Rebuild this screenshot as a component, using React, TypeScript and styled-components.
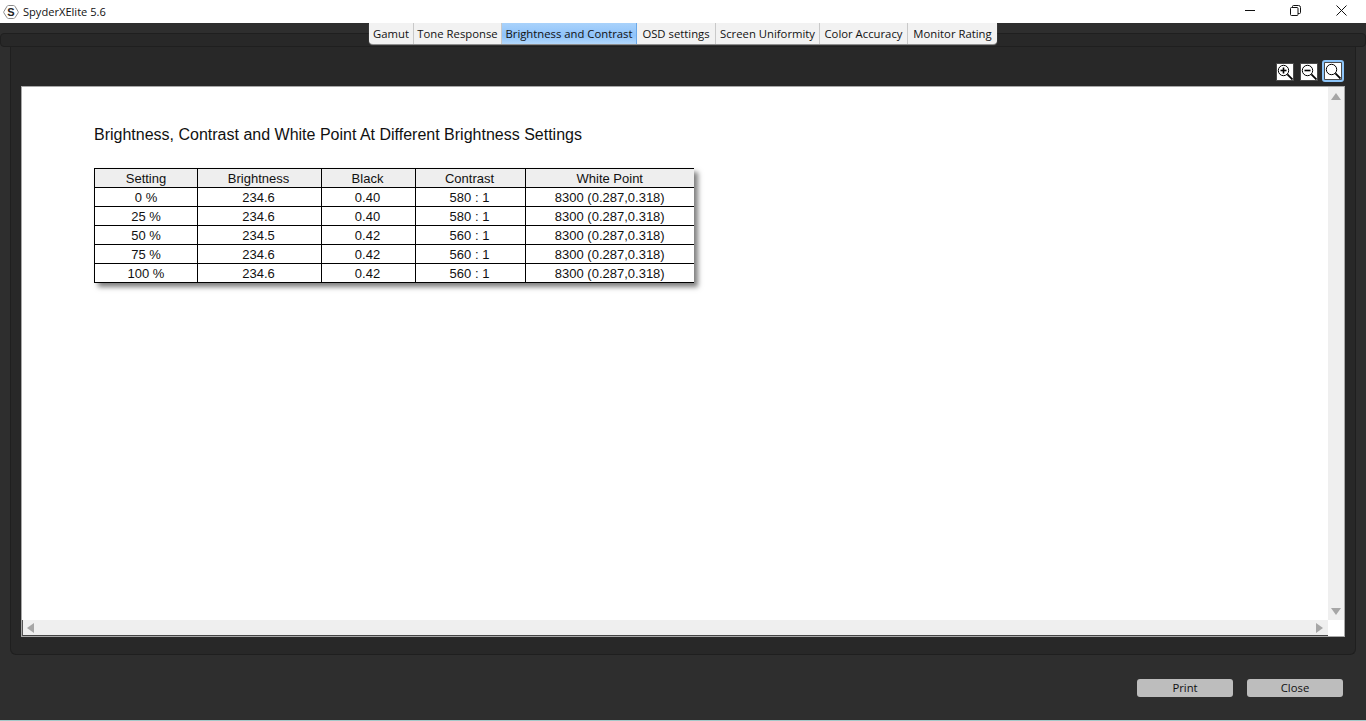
import React, { ReactElement } from 'react';
import styled, { createGlobalStyle } from 'styled-components';

const GlobalStyle = createGlobalStyle`
  html, body { margin: 0; padding: 0; height: 100%; overflow: hidden; }
  body { font-family: "Open Sans", "Noto Sans", sans-serif; background: #2e2e2e; }
`;

const Page = styled.div`
  width: 1366px;
  height: 721px;
  display: flex;
  flex-direction: column;
  background: #2e2e2e;
  border-bottom: 1px solid #a4c8c8;
  box-sizing: border-box;
`;

const TitleBar = styled.div`
  height: 23px;
  flex: none;
  display: flex;
  align-items: center;
  background: #fff;
  padding-left: 3px;
`;

const AppName = styled.span`
  font-size: 11.1px;
  color: #111;
  margin-left: 4px;
  flex: 1;
  padding-bottom: 1px;
`;

const WindowButton = styled.div`
  width: 45.5px;
  height: 20px;
  margin-bottom: 3px;
  display: flex;
  align-items: center;
  justify-content: center;
`;

const WindowButtons = styled.div`
  display: flex;
  margin-right: 2px;
`;

const TabBand = styled.div`
  height: 24px;
  flex: none;
  position: relative;
  padding-top: 10px;
  box-sizing: border-box;
`;

const TabStrip = styled.div`
  height: 14px;
  box-sizing: border-box;
  background: #282828;
  border: 1px solid #1f1f1f;
  border-radius: 4px;
`;

const Tabs = styled.div`
  position: absolute;
  top: 0;
  left: 369px;
  width: 628px;
  height: 21px;
  display: flex;
  background: #f2f2f2;
  border-radius: 0 0 4px 4px;
  box-shadow: 0 1px 1px #9a9a9a;
`;

const Tab = styled.div<{ $active?: boolean; $w: number }>`
  width: ${(p) => p.$w}px;
  box-sizing: border-box;
  text-align: center;
  font-size: 11.3px;
  line-height: 21px;
  white-space: nowrap;
  color: #111;
  background: ${(p) => (p.$active ? 'linear-gradient(#a9d2fb, #8fc3fa 60%, #b4d8fc)' : 'transparent')};
  border-right: 1px solid ${(p) => (p.$active ? '#6aa9ea' : '#c9c9c9')};
  &:last-child { border-right: none; }
`;

const Panel = styled.div`
  margin: 0 10px;
  width: 1346px;
  height: 608px;
  flex: none;
  box-sizing: border-box;
  background: #282828;
  border: 1px solid #1f1f1f;
  border-top: none;
  border-radius: 0 0 6px 6px;
  padding: 13px 10px 0 10px;
  display: flex;
  flex-direction: column;
`;

const ZoomBar = styled.div`
  height: 26px;
  flex: none;
  display: flex;
  justify-content: flex-end;
  align-items: flex-start;
  padding-right: 3px;
`;

const ZoomButton = styled.div<{ $selected?: boolean }>`
  width: 18px;
  height: 18px;
  margin: ${(p) => (p.$selected ? '2px 0 0 6px' : '3px 0 0 6px')};
  box-sizing: border-box;
  background: #fff;
  border: 1px solid #4a4a4a;
  outline: ${(p) => (p.$selected ? '2px solid #8cc4f8' : 'none')};
  outline-offset: 0;
  border-radius: ${(p) => (p.$selected ? '1px' : '0')};
  display: flex;
  align-items: center;
  justify-content: center;
  &:first-child { margin-left: 0; }
`;

const Viewer = styled.div`
  width: 1324px;
  height: 551px;
  flex: none;
  box-sizing: border-box;
  background: #fff;
  border: 1px solid #a8a8a8;
  display: grid;
  grid-template-columns: 1fr 16px;
  grid-template-rows: 1fr 16px;
`;

const Document = styled.div`
  padding: 39px 0 0 72px;
  font-family: "Liberation Sans", Arial, sans-serif;
  color: #111;
`;

const Heading = styled.h1`
  margin: 0 0 24px;
  font-size: 16px;
  font-weight: 400;
  line-height: 18px;
`;

const ReportTable = styled.table`
  border-collapse: collapse;
  table-layout: fixed;
  width: 599px;
  font-size: 13px;
  box-shadow: 4px 4px 5px rgba(0, 0, 0, 0.5);
  background: #fff;
`;

const HeadCell = styled.th<{ $w: number }>`
  width: ${(p) => p.$w}px;
  height: 19px;
  box-sizing: border-box;
  padding: 1px 0 0;
  font-weight: 400;
  background: #eee;
  border: 1px solid #000;
  &:not(:first-child) { padding-right: 2px; }
  &:last-child { border-right: none; padding-right: 0; }
`;

const Cell = styled.td`
  height: 19px;
  box-sizing: border-box;
  padding: 1px 0 0;
  text-align: center;
  border: 1px solid #000;
  &:not(:first-child) { padding-right: 2px; }
  &:last-child { border-right: none; padding-right: 0; }
`;

const VTrack = styled.div`
  background: #efefef;
  display: flex;
  flex-direction: column;
  justify-content: space-between;
  align-items: center;
  padding: 6px 0 5px;
`;

const HTrack = styled.div`
  background: #efefef;
  border-left: 1px solid #555;
  border-bottom: 1px solid #444;
  display: flex;
  justify-content: space-between;
  align-items: center;
  padding: 0 5px 0 4px;
`;

const Corner = styled.div`
  background: #fff;
`;

const Arrow = styled.div<{ $dir: 'up' | 'down' | 'left' | 'right' }>`
  width: 0;
  height: 0;
  border-style: solid;
  border-color: transparent;
  ${(p) => (p.$dir === 'up' ? 'border-width: 0 5px 7px; border-bottom-color: #a6a6a6;' : '')}
  ${(p) => (p.$dir === 'down' ? 'border-width: 7px 5px 0; border-top-color: #a6a6a6;' : '')}
  ${(p) => (p.$dir === 'left' ? 'border-width: 5px 7px 5px 0; border-right-color: #a6a6a6;' : '')}
  ${(p) => (p.$dir === 'right' ? 'border-width: 5px 0 5px 7px; border-left-color: #a6a6a6;' : '')}
`;

const Footer = styled.div`
  flex: 1;
  display: flex;
  justify-content: flex-end;
  gap: 14px;
  padding: 24px 23px 0 0;
`;

const FooterButton = styled.div`
  width: 96px;
  height: 18px;
  background: #bdbdbd;
  border-radius: 3px;
  font-size: 11.3px;
  line-height: 18px;
  text-align: center;
  color: #111;
`;

const tabs = [
  { label: 'Gamut', w: 45 },
  { label: 'Tone Response', w: 88 },
  { label: 'Brightness and Contrast', w: 135, active: true },
  { label: 'OSD settings', w: 79 },
  { label: 'Screen Uniformity', w: 104 },
  { label: 'Color Accuracy', w: 88 },
  { label: 'Monitor Rating', w: 89 },
];

const columns = [
  { label: 'Setting', w: 103 },
  { label: 'Brightness', w: 124 },
  { label: 'Black', w: 94 },
  { label: 'Contrast', w: 110 },
  { label: 'White Point', w: 168 },
];

const rows = [
  ['0 %', '234.6', '0.40', '580 : 1', '8300 (0.287,0.318)'],
  ['25 %', '234.6', '0.40', '580 : 1', '8300 (0.287,0.318)'],
  ['50 %', '234.5', '0.42', '560 : 1', '8300 (0.287,0.318)'],
  ['75 %', '234.6', '0.42', '560 : 1', '8300 (0.287,0.318)'],
  ['100 %', '234.6', '0.42', '560 : 1', '8300 (0.287,0.318)'],
];

const Logo = () => (
  <svg width="16" height="16" viewBox="0 0 16 16">
    <path d="M5.500 1.500h5q1 0 1.600 1l3 5q.4.7 0 1.400l-3 4.600q-.6 1-1.600 1h-5q-1 0-1.600-1l-3-4.600q-.4-.7 0-1.400l3-5q.6-1 1.600-1z" fill="#fff" stroke="#8a8a8a" strokeWidth="1" />
    <text x="8" y="12" textAnchor="middle" fontSize="11" fontWeight="700" fontFamily="Liberation Sans" fill="#222">S</text>
  </svg>
);

const Magnifier = ({ mark }: { mark?: 'plus' | 'minus' }) => (
  <svg width="16" height="16" viewBox="0 0 16 16" fill="none" stroke="#000">
    <circle cx="6.500" cy="6.500" r="5.200" strokeWidth="1" />
    <path d="M10.400 10.400 15.500 15.500" strokeWidth="1.800" />
    {mark && <path d="M3.500 6.500h6" strokeWidth="1.600" />}
    {mark === 'plus' && <path d="M6.500 3.500v6" strokeWidth="1.600" />}
  </svg>
);

const App = (): ReactElement => (
  <Page>
    <GlobalStyle />
    <TitleBar>
      <Logo />
      <AppName>SpyderXElite 5.6</AppName>
      <WindowButtons>
        <WindowButton>
          <svg width="11" height="11" viewBox="0 0 11 11"><path d="M0 5.500h10" stroke="#111" /></svg>
        </WindowButton>
        <WindowButton>
          <svg width="11" height="11" viewBox="0 0 11 11" fill="none" stroke="#111">
            <rect x="0.500" y="2.500" width="7.500" height="8" rx="1" />
            <path d="M2.500 2.500V1.500a1 1 0 0 1 1-1h5a2 2 0 0 1 2 2v5a1 1 0 0 1-1 1H8" />
          </svg>
        </WindowButton>
        <WindowButton>
          <svg width="11" height="11" viewBox="0 0 11 11"><path d="M0.500 0.500l10 10M10.500 0.500l-10 10" stroke="#111" /></svg>
        </WindowButton>
      </WindowButtons>
    </TitleBar>
    <TabBand>
      <TabStrip />
      <Tabs>
        {tabs.map((t) => (
          <Tab key={t.label} $w={t.w} $active={t.active}>{t.label}</Tab>
        ))}
      </Tabs>
    </TabBand>
    <Panel>
      <ZoomBar>
        <ZoomButton><Magnifier mark="plus" /></ZoomButton>
        <ZoomButton><Magnifier mark="minus" /></ZoomButton>
        <ZoomButton $selected><Magnifier /></ZoomButton>
      </ZoomBar>
      <Viewer>
        <Document>
          <Heading>Brightness, Contrast and White Point At Different Brightness Settings</Heading>
          <ReportTable>
            <thead>
              <tr>
                {columns.map((c) => (
                  <HeadCell key={c.label} $w={c.w}>{c.label}</HeadCell>
                ))}
              </tr>
            </thead>
            <tbody>
              {rows.map((r) => (
                <tr key={r[0]}>
                  {r.map((v, i) => (
                    <Cell key={i}>{v}</Cell>
                  ))}
                </tr>
              ))}
            </tbody>
          </ReportTable>
        </Document>
        <VTrack>
          <Arrow $dir="up" />
          <Arrow $dir="down" />
        </VTrack>
        <HTrack>
          <Arrow $dir="left" />
          <Arrow $dir="right" />
        </HTrack>
        <Corner />
      </Viewer>
    </Panel>
    <Footer>
      <FooterButton>Print</FooterButton>
      <FooterButton>Close</FooterButton>
    </Footer>
  </Page>
);

export default App;
